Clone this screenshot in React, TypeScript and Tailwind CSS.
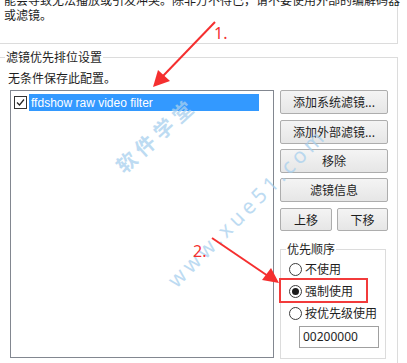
import React from 'react';

const cjk = { fontFamily: '"Noto Sans CJK SC", "Noto Sans", sans-serif' };

function WinButton({ label, className = '' }: { label: string; className?: string }) {
  return (
    <div
      className={[
        'flex items-center justify-center rounded-[2px] border border-[#adadad] bg-gradient-to-b from-[#f4f4f4] to-[#e6e6e6] text-[12px] text-[#1e1e1e]',
        className,
      ].join(' ')}
    >
      {label}
    </div>
  );
}

function Radio({ label, checked }: { label: string; checked?: boolean }) {
  return (
    <div className="flex h-[22px] items-center gap-[3px] pl-[8px] text-[12px] text-[#1e1e1e]">
      <span className="flex h-[13px] w-[13px] items-center justify-center rounded-full border border-[#3c3c3c] bg-white">
        {checked ? <span className="h-[7px] w-[7px] rounded-full bg-[#1c1c1c]" /> : null}
      </span>
      <span>{label}</span>
    </div>
  );
}

export default function App() {
  return (
    <div className="relative h-[363px] w-[407px] overflow-hidden bg-white" style={cjk}>
      {/* upper group (cut off) */}
      <div className="-mt-[9px] h-[53px] w-[398px] border-r border-b border-[#dcdcdc] pl-[4px] pt-[1px] text-[12px] leading-[15px] text-[#1e1e1e]">
        <p className="whitespace-nowrap">能会导致无法播放或引发冲突。除非万不得已，请不要使用外部的编解码器</p>
        <p>或滤镜。</p>
      </div>

      {/* filter priority group */}
      <div className="relative mt-[13px] h-[320px] w-[398px] border-t border-r border-[#dcdcdc]">
        <span className="absolute -top-[9px] left-[5px] bg-white px-[1px] text-[12px] leading-[16px] text-[#1e1e1e]">
          滤镜优先排位设置
        </span>
        <p className="pl-[8px] pt-[12px] text-[12px] leading-[16px] text-[#1e1e1e]">无条件保存此配置。</p>

        <div className="mt-[4px] flex pl-[10px]">
          <div className="h-[268px] w-[264px] border border-[#828790] bg-white pl-[3px] pt-[3px]">
            <div className="flex items-center">
              <span className="flex h-[13px] w-[13px] items-center justify-center border border-[#333] bg-white">
                <svg width="9" height="9" viewBox="0 0 9 9">
                  <path d="M1 4.5 L3.5 7 L8 1.5" fill="none" stroke="#222" strokeWidth="1.2" />
                </svg>
              </span>
              <div
                className="ml-[2px] flex h-[17px] w-[230px] items-center bg-[#3399ff] pl-[2px] text-[12px] text-white"
                style={{ fontFamily: '"Liberation Sans", sans-serif' }}
              >
                ffdshow raw video filter
              </div>
            </div>
          </div>

          <div className="ml-[6px] flex w-[108px] flex-col">
            <WinButton label="添加系统滤镜..." className="h-[24px]" />
            <WinButton label="添加外部滤镜..." className="mt-[6px] h-[24px]" />
            <WinButton label="移除" className="mt-[5px] h-[24px]" />
            <WinButton label="滤镜信息" className="mt-[5px] h-[24px]" />
            <div className="mt-[6px] flex gap-[5px]">
              <WinButton label="上移" className="h-[23px] w-[52px]" />
              <WinButton label="下移" className="h-[23px] w-[51px]" />
            </div>

            <div className="relative mt-[18px] h-[110px] w-[106px] border border-[#dcdcdc]">
              <span className="absolute -top-[9px] left-[5px] bg-white px-[1px] text-[12px] leading-[16px] text-[#1e1e1e]">
                优先顺序
              </span>
              <div className="mt-[8px] flex flex-col">
                <Radio label="不使用" />
                <Radio label="强制使用" checked />
                <Radio label="按优先级使用" />
              </div>
              <div className="ml-[18px] mt-[2px] flex h-[22px] w-[80px] items-center border border-[#a0a0a0] pl-[3px] text-[12px] text-[#1e1e1e]" style={{ fontFamily: '"Noto Sans", sans-serif' }}>
                00200000
              </div>
            </div>
          </div>
        </div>
      </div>

      {/* red highlight box */}
      <div className="absolute left-[279px] top-[278px] h-[25px] w-[89px] border-2 border-[#f23b3b]" />

      {/* watermark */}
      <div className="pointer-events-none absolute left-[106px] top-[120px] -rotate-[42deg] text-[20px] font-bold tracking-[5px] text-[#a8d0ee] opacity-75">
        软件学堂
      </div>
      <div
        className="pointer-events-none absolute left-[140px] top-[192px] -rotate-[45deg] text-[21px] tracking-[4px] text-[#a8d0ee] opacity-75"
        style={{ fontFamily: '"Noto Sans", sans-serif' }}
      >
        www.xue51.com
      </div>

      {/* annotation arrows */}
      <svg className="pointer-events-none absolute left-0 top-0" width="407" height="363">
        <line x1="215" y1="22" x2="163" y2="76" stroke="#f52f2f" strokeWidth="2" />
        <polygon points="153,87 158,70 170,81" fill="#f52f2f" />
        <line x1="212" y1="238" x2="268" y2="276" stroke="#f52f2f" strokeWidth="2" />
        <polygon points="279,283 262,280 271,268" fill="#f52f2f" />
      </svg>
      <span className="absolute left-[214px] top-[24px] text-[16px] leading-[18px] text-[#f52f2f]" style={{ fontFamily: '"Noto Sans", sans-serif' }}>
        1.
      </span>
      <span className="absolute left-[193px] top-[242px] text-[16px] leading-[18px] text-[#f52f2f]" style={{ fontFamily: '"Noto Sans", sans-serif' }}>
        2.
      </span>
    </div>
  );
}
